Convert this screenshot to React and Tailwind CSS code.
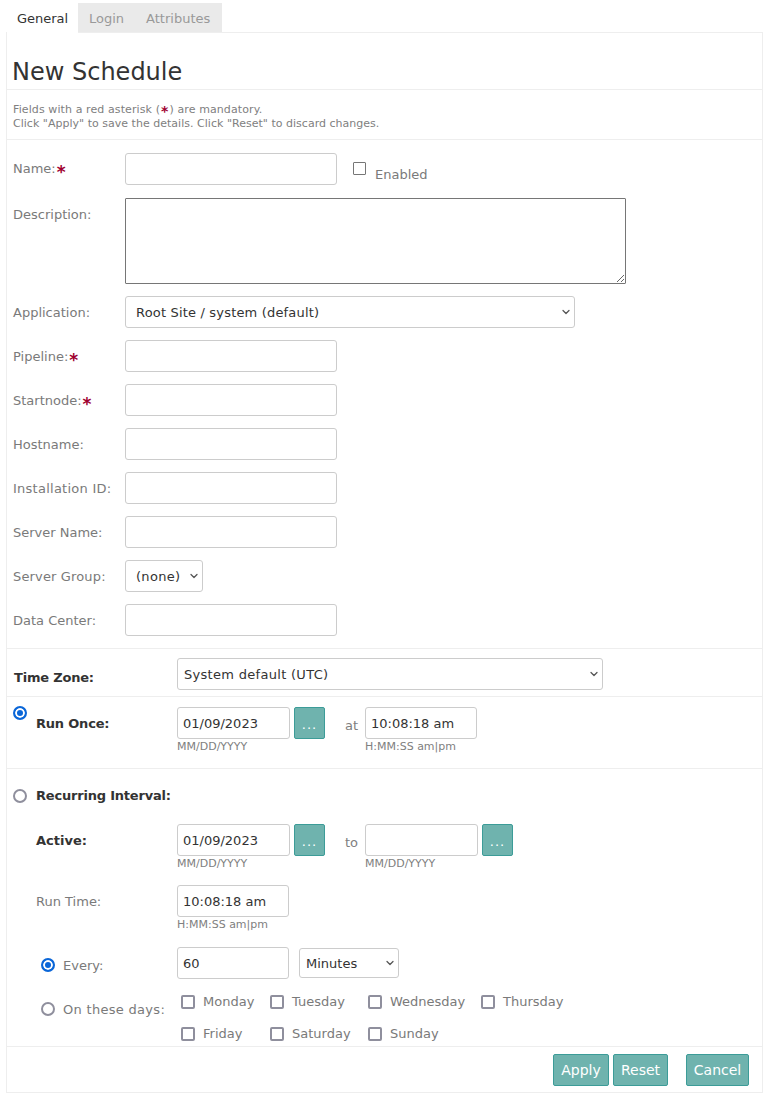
import React from "react";
import { ChevronDown } from "lucide-react";

const font = "font-['DejaVu_Sans',Verdana,sans-serif]";
const inputCls = "h-8 border border-[#ccc] rounded-[3px] bg-white px-[5px] text-[13px] text-[#333] outline-none";

function Asterisk({ className = "text-[17px] align-[-5px] ml-px" }) {
  return <span className={`text-[#a00030] font-bold leading-none ${className}`}>*</span>;
}

function Select({ value, width, height = "h-8", pad = "pl-[10px]", className = "", tracking = "" }) {
  return (
    <div className={`relative ${width} ${height} ${className}`}>
      <select className={`appearance-none w-full h-full border border-[#ccc] rounded-[3px] bg-white pt-[2px] text-[13px] text-[#333] outline-none ${pad} ${tracking}`}>
        <option>{value}</option>
      </select>
      <ChevronDown size={12} strokeWidth={2.5} className="absolute right-[3px] top-1/2 -translate-y-1/2 text-[#555] pointer-events-none" />
    </div>
  );
}

function FieldRow({ label, required, children, className = "mb-3", labelClass = "pt-[2px]" }) {
  return (
    <div className={`flex items-center pl-[6px] ${className}`}>
      <label className={`w-[112px] h-[20px] leading-[20px] box-content text-[13px] text-[#7a7a7a] ${labelClass}`}>
        {label}
        {required && <Asterisk />}
      </label>
      {children}
    </div>
  );
}

function Radio({ checked }) {
  return (
    <input
      type="radio"
      defaultChecked={checked}
      className="block appearance-none w-[14px] h-[14px] rounded-full border-2 border-[#8f8f9d] bg-white checked:border-[#0a66d8] checked:bg-[#0a66d8] checked:shadow-[inset_0_0_0_2px_white]"
    />
  );
}

function Check({ label }) {
  return (
    <label className="flex items-center text-[13px] text-[#7a7a7a]">
      <input type="checkbox" className="appearance-none w-[14px] h-[14px] rounded-[2px] border-2 border-[#8f8f9d] bg-white" />
      <span className="ml-[8px]">{label}</span>
    </label>
  );
}

function DateField({ value, hint = "MM/DD/YYYY", width = "w-[113px]", button = true }) {
  return (
    <div className="flex flex-col">
      <div className="flex">
        <input type="text" defaultValue={value} className={`${inputCls} ${width}`} />
        {button && (
          <button className="ml-1 w-[31px] h-8 pt-[4px] rounded-[2px] border border-[#3c9c98] bg-[#6fb3ae] text-[13px] tracking-[1px] text-white">...</button>
        )}
      </div>
      <span className="mt-px text-[11px] leading-[14px] text-[#808080]">{hint}</span>
    </div>
  );
}

function ActionButton({ children, className = "" }) {
  return (
    <button className={`h-8 rounded-[2px] border border-[#3c9c98] bg-[#6fb3ae] text-[14px] text-white ${className}`}>{children}</button>
  );
}

export default function App() {
  return (
    <div className={`w-[769px] h-[1099px] bg-white pt-[3px] px-[6px] ${font}`}>
      <div className="flex h-[30px] ml-px">
        <div className="relative z-10 w-[71px] h-[30px] pt-[2px] bg-white text-[13px] text-[#333] flex items-center justify-center">General</div>
        <div className="flex h-[29px] bg-[#eaeaea] text-[13px] text-[#999] items-center pt-[2px] pl-[11px] pr-[12px] gap-[22px]">
          <span>Login</span>
          <span>Attributes</span>
        </div>
      </div>
      <div className="w-[757px] h-[1061px] border border-[#eee] -mt-px">
        <div className="h-[56px] flex flex-col justify-end">
          <h1 className="text-[24px] leading-[30px] text-[#333] pl-[5px] pb-[2px] font-normal">New Schedule</h1>
        </div>
        <div className="h-[51px] border-t border-b border-[#eee] pl-[6px] pt-[13px] text-[11px] leading-[14px] text-[#808080]">
          <p className="h-[14px] tracking-[0.1px]">Fields with a red asterisk (<Asterisk className="text-[14px] align-[-3px] mx-px" />) are mandatory.</p>
          <p className="h-[14px] tracking-[0.02px]">Click "Apply" to save the details. Click "Reset" to discard changes.</p>
        </div>

        <div className="pt-[13px] border-b border-[#eee] h-[509px]">
          <FieldRow label="Name:" required className="mb-[13px]" labelClass="">
            <input type="text" className={`${inputCls} w-[212px]`} />
            <input type="checkbox" className="appearance-none w-[13px] h-[13px] ml-[16px] border border-[#767676] rounded-[1px] self-start mt-[9px]" />
            <span className="ml-[9px] mt-[11px] text-[13px] text-[#7a7a7a]">Enabled</span>
          </FieldRow>
          <div className="flex pl-[6px] mb-3">
            <label className="w-[112px] text-[13px] text-[#7a7a7a] pt-[7px]">Description:</label>
            <textarea className="w-[501px] h-[86px] border border-[#767676] rounded-[1px] outline-none" />
          </div>
          <FieldRow label="Application:">
            <Select value="Root Site / system (default)" width="w-[450px]" tracking="tracking-[0.18px]" />
          </FieldRow>
          <FieldRow label="Pipeline:" required>
            <input type="text" className={`${inputCls} w-[212px]`} />
          </FieldRow>
          <FieldRow label="Startnode:" required>
            <input type="text" className={`${inputCls} w-[212px]`} />
          </FieldRow>
          <FieldRow label="Hostname:">
            <input type="text" className={`${inputCls} w-[212px]`} />
          </FieldRow>
          <FieldRow label={<span className="tracking-[0.25px]">Installation ID:</span>}>
            <input type="text" className={`${inputCls} w-[212px]`} />
          </FieldRow>
          <FieldRow label="Server Name:">
            <input type="text" className={`${inputCls} w-[212px]`} />
          </FieldRow>
          <FieldRow label={<span className="tracking-[0.15px]">Server Group:</span>}>
            <Select value="(none)" width="w-[78px]" tracking="tracking-[0.3px]" />
          </FieldRow>
          <FieldRow label="Data Center:" className="">
            <input type="text" className={`${inputCls} w-[212px]`} />
          </FieldRow>
        </div>

        <div className="h-[48px] border-b border-[#eee] flex pt-[9px] pl-[7px]">
          <label className="w-[163px] pt-[10px] text-[13px] font-bold text-[#333] tracking-[-0.2px]">Time Zone:</label>
          <Select value="System default (UTC)" width="w-[426px]" pad="pl-[6px]" tracking="tracking-[0.3px]" />
        </div>

        <div className="h-[72px] border-b border-[#eee] flex pt-[10px] pl-[6px]">
          <div className="w-[23px] -mt-[1px]"><Radio checked /></div>
          <label className="w-[141px] pt-[7px] text-[13px] font-bold text-[#333] tracking-[-0.2px]">Run Once:</label>
          <DateField value="01/09/2023" />
          <span className="w-[40px] pt-[9px] pl-[20px] text-[13px] text-[#808080]">at</span>
          <DateField value="10:08:18 am" hint="H:MM:SS am|pm" width="w-[112px]" button={false} />
        </div>

        <div className="flex items-center h-[53px] mb-[2px] pl-[6px]">
          <div className="w-[23px] flex"><Radio /></div>
          <label className="text-[13px] font-bold text-[#333] tracking-[-0.2px]">Recurring Interval:</label>
        </div>
        <div className="flex pl-[29px]">
          <label className="w-[141px] pt-[7px] text-[13px] font-bold text-[#333]">Active:</label>
          <DateField value="01/09/2023" />
          <span className="w-[40px] pt-[9px] pl-[20px] text-[13px] text-[#808080]">to</span>
          <DateField />
        </div>
        <div className="flex pl-[29px] mt-[14px]">
          <label className="w-[141px] pt-[7px] text-[13px] text-[#7a7a7a]">Run Time:</label>
          <DateField value="10:08:18 am" hint="H:MM:SS am|pm" width="w-[112px]" button={false} />
        </div>
        <div className="flex items-center mt-[15px] pl-[34px]">
          <div className="w-[22px] flex pt-[4px]"><Radio checked /></div>
          <label className="w-[114px] pt-[6px] text-[13px] text-[#7a7a7a]">Every:</label>
          <input type="text" defaultValue="60" className={`${inputCls} w-[112px]`} />
          <Select value="Minutes" width="w-[100px]" height="h-[30px]" pad="pl-[6px]" className="ml-[10px]" />
        </div>
        <div className="flex mt-[10px] pl-[34px]">
          <div className="w-[22px] pt-[13px]"><Radio /></div>
          <label className="w-[114px] pt-[11px] text-[13px] text-[#7a7a7a] tracking-[0.3px] whitespace-nowrap">On these days:</label>
          <div className="grid grid-cols-[89px_98px_113px_auto] grid-rows-[25px_25px] gap-y-[7px] pl-[4px]">
            <Check label="Monday" />
            <Check label="Tuesday" />
            <Check label="Wednesday" />
            <Check label="Thursday" />
            <Check label="Friday" />
            <Check label="Saturday" />
            <Check label="Sunday" />
          </div>
        </div>

        <div className="border-t border-[#eee] h-[49px] flex justify-end pt-[7px] pr-[13px]">
          <ActionButton className="w-[56px]">Apply</ActionButton>
          <ActionButton className="w-[55px] ml-1">Reset</ActionButton>
          <ActionButton className="w-[63px] ml-[18px]">Cancel</ActionButton>
        </div>
      </div>
    </div>
  );
}
